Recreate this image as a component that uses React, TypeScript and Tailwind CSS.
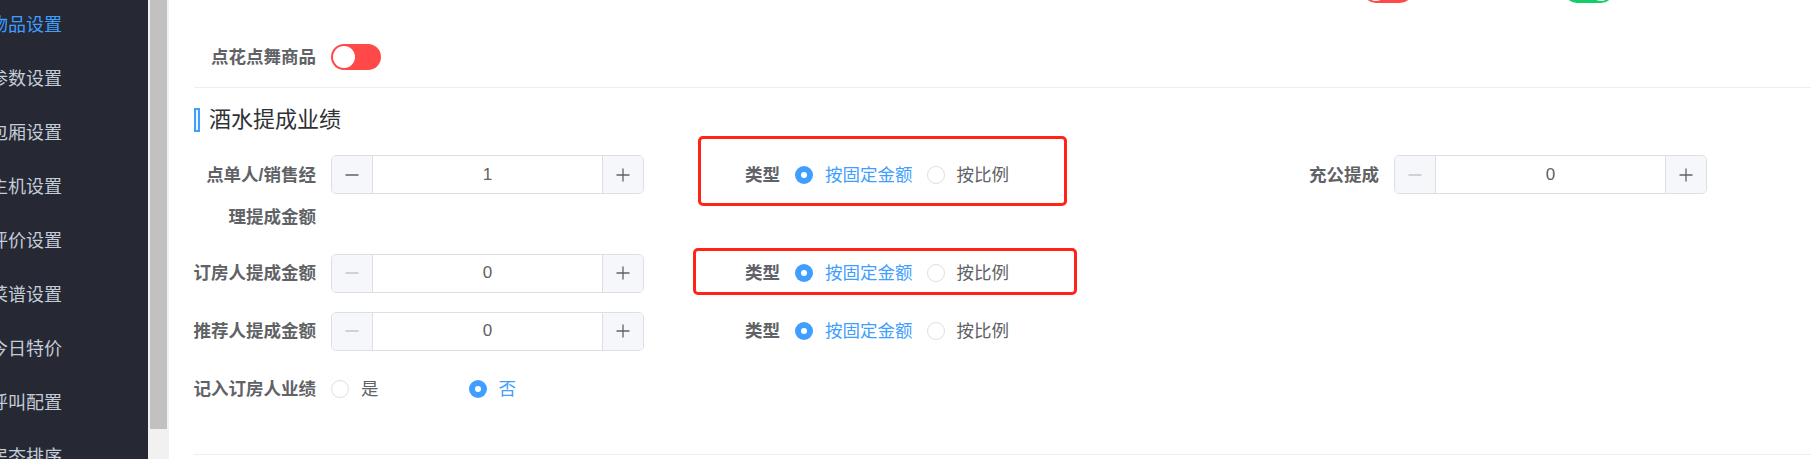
import React from "react";

const font = "font-['Liberation_Sans','Noto_Sans_CJK_SC',sans-serif]";

const menu = ["物品设置", "参数设置", "包厢设置", "主机设置", "评价设置", "菜谱设置", "今日特价", "呼叫配置", "房态排序"];

const Switch = ({ on, color }: { on: boolean; color: string }) => (
  <div className={`relative h-[26px] w-[50px] rounded-full ${color}`}>
    <div className={`absolute top-[2px] h-[22px] w-[22px] rounded-full bg-white ${on ? "right-[2px]" : "left-[2px]"}`} />
  </div>
);

const Minus = ({ disabled }: { disabled?: boolean }) => (
  <svg width="14" height="14" viewBox="0 0 14 14">
    <line x1="0.5" y1="7" x2="13.5" y2="7" stroke={disabled ? "#c0c4cc" : "#606266"} strokeWidth="1.3" />
  </svg>
);

const Plus = () => (
  <svg width="14" height="14" viewBox="0 0 14 14">
    <line x1="0.5" y1="7" x2="13.5" y2="7" stroke="#606266" strokeWidth="1.3" />
    <line x1="7" y1="0.5" x2="7" y2="13.5" stroke="#606266" strokeWidth="1.3" />
  </svg>
);

const InputNumber = ({ value, minusDisabled }: { value: string; minusDisabled?: boolean }) => (
  <div className="flex h-[39px] w-[313px] overflow-hidden rounded-[5px] border border-[#dcdfe6] bg-white">
    <div className="flex w-[41px] items-center justify-center border-r border-[#dcdfe6] bg-[#f5f7fa]">
      <Minus disabled={minusDisabled} />
    </div>
    <div className="flex flex-1 items-center justify-center text-[17px] text-[#606266]">{value}</div>
    <div className="flex w-[41px] items-center justify-center border-l border-[#dcdfe6] bg-[#f5f7fa]">
      <Plus />
    </div>
  </div>
);

const Radio = ({ checked, label, className = "" }: { checked: boolean; label: string; className?: string }) => (
  <div className={`flex items-center ${className}`}>
    {checked ? (
      <span className="flex h-[18px] w-[18px] items-center justify-center rounded-full bg-[#409eff]">
        <span className="h-[6px] w-[6px] rounded-full bg-white" />
      </span>
    ) : (
      <span className="h-[18px] w-[18px] rounded-full border border-[#dcdfe6] bg-white" />
    )}
    <span className={`ml-[12px] whitespace-nowrap text-[17.5px] ${checked ? "text-[#409eff]" : "text-[#606266]"}`}>{label}</span>
  </div>
);

const TypeField = () => (
  <div className="flex h-[42px] items-center">
    <div className="w-[74px] whitespace-nowrap pr-[15px] text-right text-[17.5px] font-bold text-[#606266]">类型</div>
    <Radio checked label="按固定金额" />
    <Radio checked={false} label="按比例" className="ml-[14px]" />
  </div>
);

const Label = ({ children }: { children: React.ReactNode }) => (
  <div className="flex w-[137px] shrink-0 flex-col items-end whitespace-nowrap pr-[15px] text-[17.5px] font-bold leading-[42px] text-[#606266]">
    {children}
  </div>
);

export default function App() {
  return (
    <div className={`relative flex h-[459px] w-[1811px] overflow-hidden bg-white ${font}`}>
      <aside className="w-[148px] shrink-0 bg-[#262834]">
        <div className="-mt-[2px] -ml-[10px]">
          {menu.map((m, i) => (
            <div key={m} className={`flex h-[54px] items-center whitespace-nowrap text-[18px] ${i === 0 ? "text-[#409eff]" : "text-[#c4ccd8]"}`}>
              {m}
            </div>
          ))}
        </div>
      </aside>
      <div className="w-[21px] shrink-0 bg-[#f1f1f1] pl-[2px]">
        <div className="h-[429px] w-[17px] bg-[#c1c1c1]" />
      </div>

      <main className="min-w-0 flex-1 pl-[25px]">
        <div className="flex h-[3px] items-end overflow-hidden">
          <div className="ml-[1169px] shrink-0">
            <Switch on={false} color="bg-[#ff4949]" />
          </div>
          <div className="ml-[151px] shrink-0">
            <Switch on color="bg-[#13ce66]" />
          </div>
        </div>

        <div className="mt-[33px] flex h-[42px] items-center">
          <Label>点花点舞商品</Label>
          <Switch on={false} color="bg-[#ff4949]" />
        </div>

        <div className="mt-[9px] h-px bg-[#ebeef5]" />

        <div className="mt-[18px] flex h-[28px] items-center">
          <div className="h-[24px] w-[6px] border-2 border-[#409eff] bg-[#e8f3ff]" />
          <div className="ml-[9px] text-[22px] leading-none text-[#303133]">酒水提成业绩</div>
        </div>

        <div className="mt-[20px] flex items-start">
          <div className="flex w-[527px] items-start">
            <Label>
              <span>点单人/销售经</span>
              <span>理提成金额</span>
            </Label>
            <div className="pt-[1px]">
              <InputNumber value="1" />
            </div>
          </div>
          <div className="w-[536px]">
            <TypeField />
          </div>
          <div className="flex items-start">
            <Label>充公提成</Label>
            <div className="pt-[1px]">
              <InputNumber value="0" minusDisabled />
            </div>
          </div>
        </div>

        <div className="mt-[14px] flex items-center">
          <div className="flex w-[527px] items-center">
            <Label>订房人提成金额</Label>
            <InputNumber value="0" minusDisabled />
          </div>
          <TypeField />
        </div>

        <div className="mt-[16px] flex items-center">
          <div className="flex w-[527px] items-center">
            <Label>推荐人提成金额</Label>
            <InputNumber value="0" minusDisabled />
          </div>
          <TypeField />
        </div>

        <div className="mt-[16px] flex items-center">
          <Label>记入订房人业绩</Label>
          <Radio checked={false} label="是" />
          <Radio checked label="否" className="ml-[90px]" />
        </div>

        <div className="mt-[44px] h-px bg-[#ebeef5]" />
      </main>

      <div className="absolute left-[698px] top-[136px] h-[70px] w-[369px] rounded-[5px] border-[3px] border-[#ff2318]" />
      <div className="absolute left-[693px] top-[248px] h-[47px] w-[384px] rounded-[5px] border-[3px] border-[#ff2318]" />
    </div>
  );
}
